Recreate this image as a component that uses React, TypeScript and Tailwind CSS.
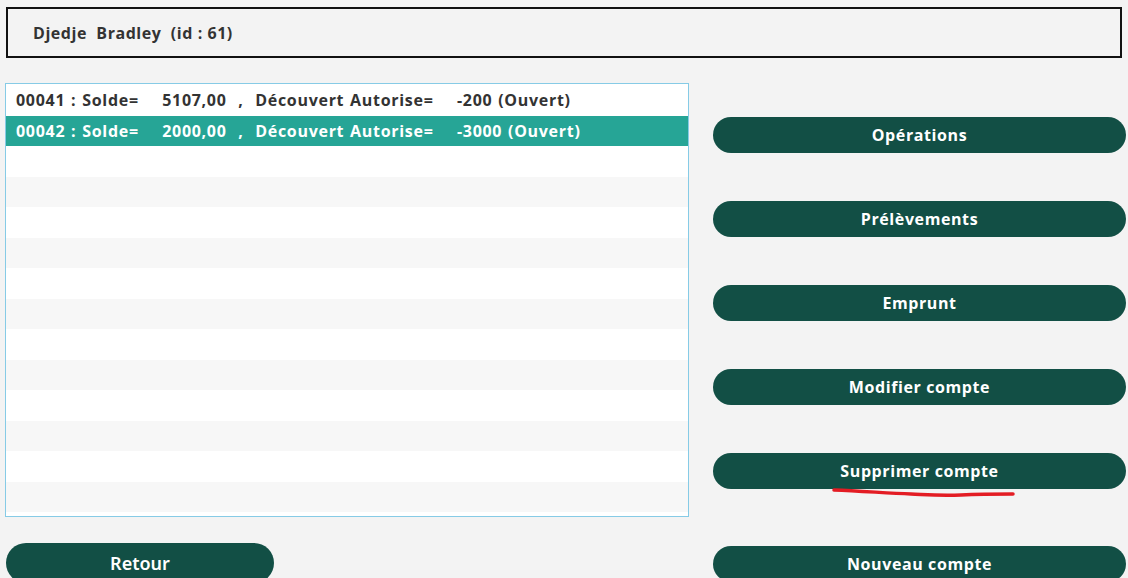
import React from "react";

const accounts = [
  { num: "00041", solde: "5107,00", decouvert: "-200", etat: "Ouvert" },
  { num: "00042", solde: "2000,00", decouvert: "-3000", etat: "Ouvert" },
];

const actions = ["Opérations", "Prélèvements", "Emprunt", "Modifier compte", "Supprimer compte"];

function App() {
  const selected = 1;
  const emptyRows = Array.from({ length: 13 });

  return (
    <div
      className="min-h-screen bg-[#f3f3f3] text-[#333] overflow-hidden"
      style={{ fontFamily: "'Open Sans', 'Liberation Sans', sans-serif" }}
    >
      {/* Client */}
      <div className="mx-[6px] pt-[7px]">
        <div className="h-[51px] border-2 border-[#111] flex items-center pl-[25px]">
          <span className="whitespace-pre text-[16px] font-bold tracking-[0.55px]">Djedje  Bradley  (id : 61)</span>
        </div>
      </div>

      <div className="flex mt-[25px]">
        {/* Liste des comptes */}
        <div className="ml-[5px] w-[684px] shrink-0">
          <div className="h-[434px] border border-[#86cbe6] bg-white overflow-hidden pt-[1px]">
            {accounts.map((a, i) => (
              <div
                key={a.num}
                className={
                  "h-[30.5px] flex items-center pl-[10px] whitespace-pre text-[16px] font-bold tracking-[0.7px] [word-spacing:1px] " +
                  (i === selected ? "bg-[#26a596] text-white" : "bg-white text-[#333]")
                }
              >
                {a.num} : Solde=    {a.solde}  ,  Découvert Autorise=    {a.decouvert} ({a.etat})
              </div>
            ))}
            {emptyRows.map((_, i) => (
              <div
                key={i}
                className={"h-[30.5px] " + (i % 2 === 0 ? "bg-white" : "bg-[#f7f7f7]")}
              />
            ))}
          </div>
          <button
            className="mt-[26px] ml-[1px] w-[268px] h-[40px] rounded-full bg-[#124f45] text-white text-[18px] font-semibold"
            style={{ fontFamily: "'Noto Sans', sans-serif" }}
          >
            Retour
          </button>
        </div>

        {/* Actions */}
        <div className="ml-[24px] w-[413px] flex flex-col pt-[34px]">
          {actions.map((label) => (
            <button
              key={label}
              className="relative h-[36px] mb-[48px] rounded-full bg-[#124f45] text-white text-[16px] font-bold tracking-[0.6px]"
            >
              {label}
              {label === "Supprimer compte" && (
                <svg
                  className="absolute left-[118px] top-[33px] pointer-events-none"
                  width="186"
                  height="14"
                  viewBox="0 0 186 14"
                >
                  <path
                    d="M3 4 C 30 5, 55 7, 80 8 C 100 9, 110 10, 130 9 C 150 8, 165 8, 182 8"
                    stroke="#e31c23"
                    strokeWidth="3.5"
                    fill="none"
                    strokeLinecap="round"
                  />
                </svg>
              )}
            </button>
          ))}
          <button className="h-[36px] mt-[9px] rounded-full bg-[#124f45] text-white text-[16px] font-bold tracking-[0.6px]">
            Nouveau compte
          </button>
        </div>
      </div>
    </div>
  );
}

export default App;
